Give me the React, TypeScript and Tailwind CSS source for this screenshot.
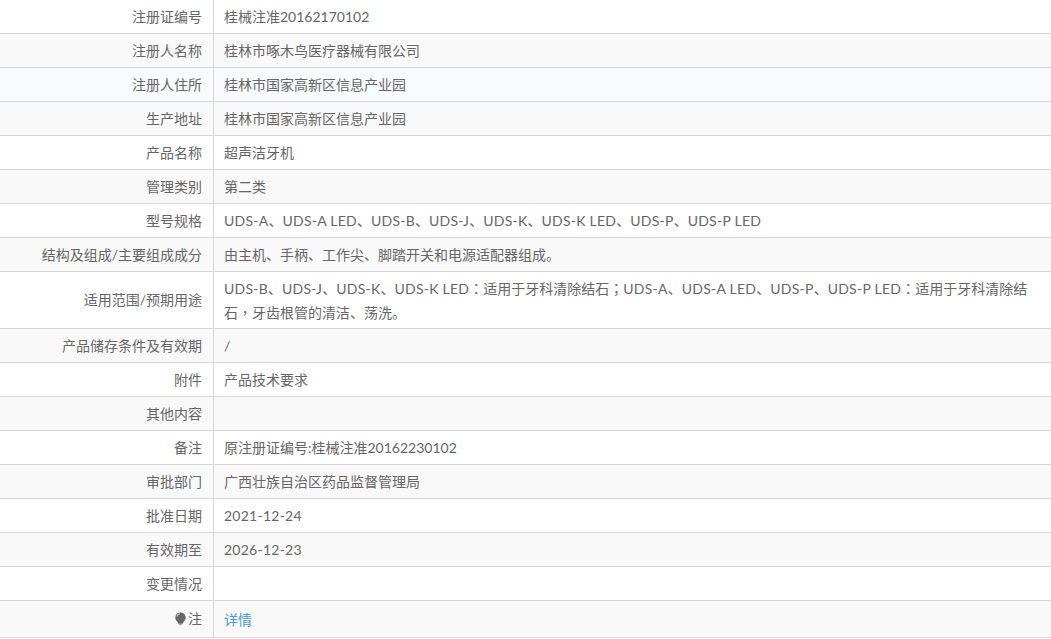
import { Fragment } from "react";

const rows: { label: string; value: string; link?: boolean; note?: boolean; bg?: string }[] = [
  { label: "注册证编号", value: "桂械注准20162170102" },
  { label: "注册人名称", value: "桂林市啄木鸟医疗器械有限公司" },
  { label: "注册人住所", value: "桂林市国家高新区信息产业园", bg: "bg-[#f8fafc]" },
  { label: "生产地址", value: "桂林市国家高新区信息产业园" },
  { label: "产品名称", value: "超声洁牙机" },
  { label: "管理类别", value: "第二类" },
  { label: "型号规格", value: "UDS-A、UDS-A LED、UDS-B、UDS-J、UDS-K、UDS-K LED、UDS-P、UDS-P LED" },
  { label: "结构及组成/主要组成成分", value: "由主机、手柄、工作尖、脚踏开关和电源适配器组成。" },
  {
    label: "适用范围/预期用途",
    value: "UDS-B、UDS-J、UDS-K、UDS-K LED：适用于牙科清除结石；UDS-A、UDS-A LED、UDS-P、UDS-P LED：适用于牙科清除结\n石，牙齿根管的清洁、荡洗。",
  },
  { label: "产品储存条件及有效期", value: "/" },
  { label: "附件", value: "产品技术要求" },
  { label: "其他内容", value: "" },
  { label: "备注", value: "原注册证编号:桂械注准20162230102" },
  { label: "审批部门", value: "广西壮族自治区药品监督管理局" },
  { label: "批准日期", value: "2021-12-24" },
  { label: "有效期至", value: "2026-12-23" },
  { label: "变更情况", value: "" },
  { label: "注", value: "详情", link: true, note: true },
];

// latin model names and dates run a bit wider than Lato; full-width marks sit centered
function Line({ text }: { text: string }) {
  const parts = text.split(/([A-Z][A-Z\- ]*|\d{4}-\d{2}-\d{2}|[：；，])/);
  return (
    <div>
      {parts.map((part, i) => {
        if (/^[：；，]$/.test(part)) {
          return <span key={i} className="font-['Noto_Sans_CJK_TC'] leading-[0]">{part}</span>;
        }
        if (/^[A-Z]|^\d{4}-/.test(part)) {
          return <span key={i} className="tracking-[0.25px]">{part}</span>;
        }
        return <Fragment key={i}>{part}</Fragment>;
      })}
    </div>
  );
}

function BulbIcon() {
  return (
    <svg width="13" height="14" viewBox="0 0 13 14" className="mr-px">
      <path d="M6.5 0.5a5.2 5.2 0 0 1 3 9.4L8 12.5H5L3.500 9.900a5.200 5.200 0 0 1 3-9.400z" fill="#666" />
      <path d="M2.800 4.500a3.800 3.800 0 0 1 3-2.600" stroke="#c4c4c4" strokeWidth="1.200" fill="none" />
      <path d="M5 11.500h3v1l-1 1H6l-1-1z" fill="#aaa" />
    </svg>
  );
}

export default function App() {
  return (
    <div className="w-[1051px] h-[639px] overflow-hidden bg-white text-[14px] leading-6 text-[#666] font-['Lato','Noto_Sans_CJK_SC',sans-serif]">
      {rows.map((row, i) => (
        <div
          key={row.label}
          className={`flex border-b border-[#d5d5d5] ${row.bg ?? (i % 2 === 1 ? "bg-[#f9f9f9]" : "bg-white")} ${row.note ? "h-[37px]" : ""}`}
        >
          <div className="w-[214px] shrink-0 flex items-center justify-end border-r border-[#d5d5d5] pr-[11px] py-1">
            {row.note && <BulbIcon />}
            {row.label}
          </div>
          {row.link ? (
            <div className="flex-1 min-w-0 flex items-center px-[10px] pt-[2px] text-[#4b9ad8]">{row.value}</div>
          ) : (
            <div className="flex-1 min-w-0 px-[10px] pt-[5px] pb-[3px] min-h-[33px] whitespace-nowrap">
              {row.value.split("\n").map((line) => (
                <Line key={line} text={line} />
              ))}
            </div>
          )}
        </div>
      ))}
    </div>
  );
}
